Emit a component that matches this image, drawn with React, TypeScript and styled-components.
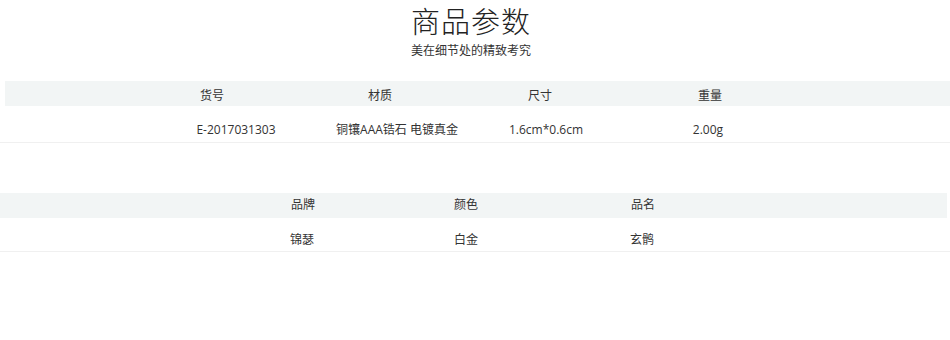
import React from "react";
import styled, { createGlobalStyle } from "styled-components";

const Global = createGlobalStyle`
  html, body { margin: 0; padding: 0; background: #fff; }
  body { font-family: "Open Sans", "Noto Sans CJK SC", sans-serif; color: #333; }
`;

const Page = styled.div`
  width: 950px;
  height: 340px;
  overflow: hidden;
  background: #fff;
`;

const Head = styled.header`
  display: flex;
  flex-direction: column;
  align-items: center;
  padding-right: 8px;
  padding-top: 5px;
`;

const Title = styled.h1`
  margin: 0;
  font-family: "Noto Sans CJK SC", sans-serif;
  font-weight: 300;
  font-size: 29px;
  line-height: 30px;
  letter-spacing: 1px;
  color: #222;
`;

const Subtitle = styled.p`
  margin: 7px 0 0;
  font-family: "Noto Sans CJK SC", sans-serif;
  font-size: 12px;
  line-height: 16px;
  color: #333;
`;

const Table = styled.section<{ $top: number }>`
  margin-top: ${(p) => p.$top}px;
`;

const Band = styled.div<{ $inset: string; $cols: string; $pad: number; $pb: number }>`
  display: grid;
  grid-template-columns: ${(p) => p.$cols};
  padding-left: ${(p) => p.$pad}px;
  margin: ${(p) => p.$inset};
  height: 25px;
  align-items: end;
  padding-bottom: ${(p) => p.$pb}px;
  box-sizing: border-box;
  background: #f2f5f5;
  font-size: 12px;
  line-height: 17px;
`;

const DataRow = styled.div<{ $cols: string; $pad: number; $h: number; $pb: number }>`
  display: grid;
  grid-template-columns: ${(p) => p.$cols};
  padding-left: ${(p) => p.$pad}px;
  height: ${(p) => p.$h}px;
  box-sizing: border-box;
  align-items: end;
  padding-bottom: ${(p) => p.$pb}px;
  border-bottom: 1px solid #f0f0f0;
  font-size: 12px;
  line-height: 17px;
`;

const Cell = styled.span`
  text-align: center;
  white-space: nowrap;
`;

export default function App() {
  return (
    <Page>
      <Global />
      <Head>
        <Title>商品参数</Title>
        <Subtitle>美在细节处的精致考究</Subtitle>
      </Head>
      <Table $top={23}>
        <Band $inset="0 0 0 5px" $pb={2} $pad={127} $cols="160px 176px 144px 196px">
          <Cell>货号</Cell>
          <Cell>材质</Cell>
          <Cell>尺寸</Cell>
          <Cell>重量</Cell>
        </Band>
        <DataRow $pad={146} $h={37} $pb={4} $cols="180px 142px 156px 168px">
          <Cell>E-2017031303</Cell>
          <Cell>铜镶AAA锆石 电镀真金</Cell>
          <Cell>1.6cm*0.6cm</Cell>
          <Cell>2.00g</Cell>
        </DataRow>
      </Table>
      <Table $top={50}>
        <Band $inset="0 3px 0 0" $pb={5} $pad={223} $cols="160px 166px 188px">
          <Cell>品牌</Cell>
          <Cell>颜色</Cell>
          <Cell>品名</Cell>
        </Band>
        <DataRow $pad={222} $h={34} $pb={3} $cols="160px 168px 184px">
          <Cell>锦瑟</Cell>
          <Cell>白金</Cell>
          <Cell>玄鹘</Cell>
        </DataRow>
      </Table>
    </Page>
  );
}
